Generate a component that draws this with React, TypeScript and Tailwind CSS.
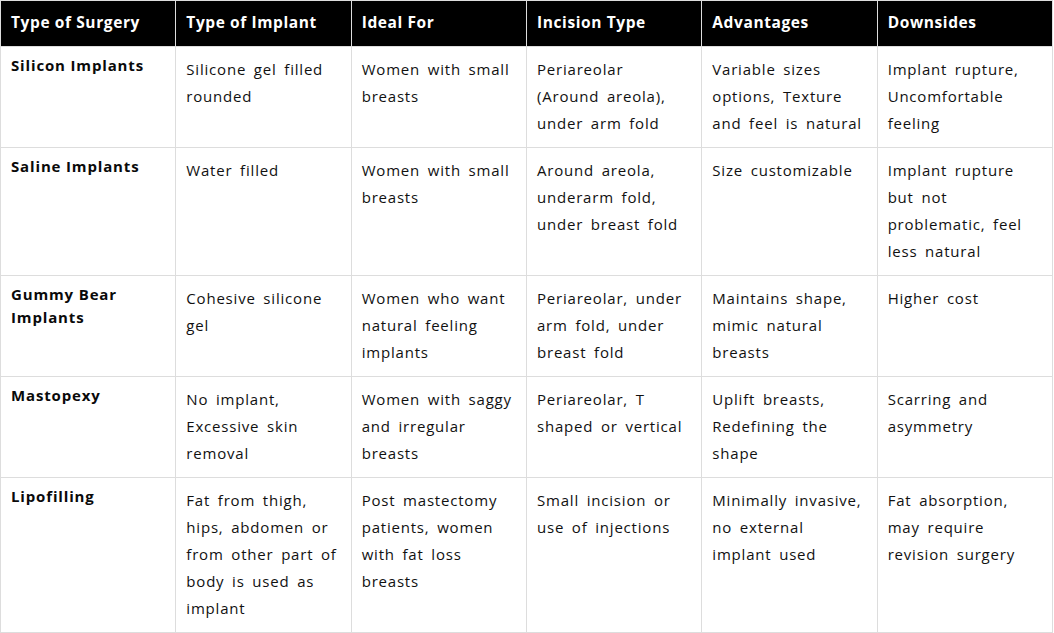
const headers = ['Type of Surgery', 'Type of Implant', 'Ideal For', 'Incision Type', 'Advantages', 'Downsides']

const rows: string[][] = [
  ['Silicon Implants', 'Silicone gel filled rounded', 'Women with small breasts', 'Periareolar (Around areola), under arm fold', 'Variable sizes options, Texture and feel is natural', 'Implant rupture, Uncomfortable feeling'],
  ['Saline Implants', 'Water filled', 'Women with small breasts', 'Around areola, underarm fold, under breast fold', 'Size customizable', 'Implant rupture but not problematic, feel less natural'],
  ['Gummy Bear Implants', 'Cohesive silicone gel', 'Women who want natural feeling implants', 'Periareolar, under arm fold, under breast fold', 'Maintains shape, mimic natural breasts', 'Higher cost'],
  ['Mastopexy', 'No implant, Excessive skin removal', 'Women with saggy and irregular breasts', 'Periareolar, T shaped or vertical', 'Uplift breasts, Redefining the shape', 'Scarring and asymmetry'],
  ['Lipofilling', 'Fat from thigh, hips, abdomen or from other part of body is used as implant', 'Post mastectomy patients, women with fat loss breasts', 'Small incision or use of injections', 'Minimally invasive, no external implant used', 'Fat absorption, may require revision surgery'],
]

export default function App() {
  return (
    <div className="bg-white w-[1054px] h-[633px] overflow-hidden" style={{ fontFamily: '"Open Sans", "Noto Sans", sans-serif' }}>
      <table className="w-[1053px] table-fixed border-collapse">
        <thead>
          <tr className="bg-black">
            {headers.map((h) => (
              <th key={h} className="border border-[#dddddd] px-[10px] pt-[9px] pb-[11px] text-left align-top text-[15.5px] leading-[25px] font-bold text-white tracking-[0.6px]">
                {h}
              </th>
            ))}
          </tr>
        </thead>
        <tbody>
          {rows.map((r) => (
            <tr key={r[0]}>
              {r.map((c, i) => (
                <td
                  key={i}
                  className={
                    i === 0
                      ? 'border border-[#dddddd] px-[10px] pt-[7px] pb-[10px] align-top text-[15px] leading-[23px] font-bold text-[#0a0a0a] tracking-[0.85px]'
                      : 'border border-[#dddddd] px-[10px] pt-[9px] pb-[10px] align-top text-[15px] leading-[27px] text-[#111111] tracking-[0.8px] [word-spacing:3px]'
                  }
                >
                  {c}
                </td>
              ))}
            </tr>
          ))}
        </tbody>
      </table>
    </div>
  )
}
